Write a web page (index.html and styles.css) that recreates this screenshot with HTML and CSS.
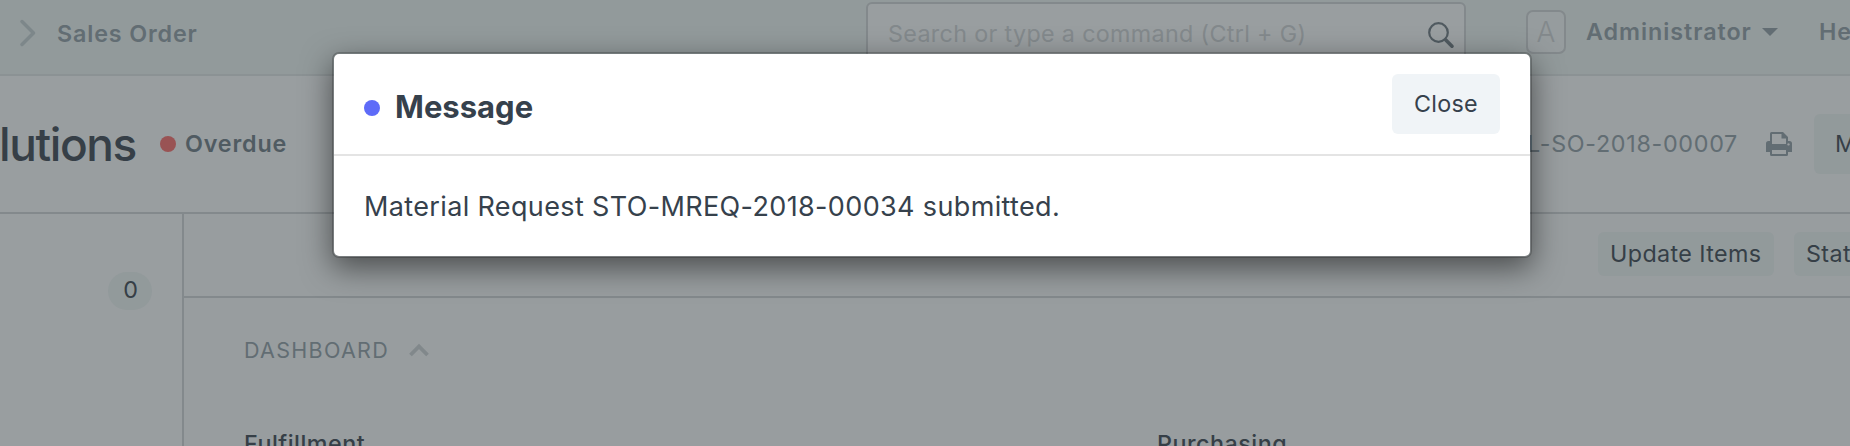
FILE: index.html
```html
<!DOCTYPE html>
<html lang="en">
<head>
<meta charset="utf-8">
<title>Sales Order</title>
<link rel="stylesheet" href="styles.css">
</head>
<body>
<div class="page">
  <header class="navbar">
    <svg class="crumb-arrow" width="20" height="30" viewBox="0 0 20 30"><path d="M4 3.500L15.500 15L4 26.500" fill="none" stroke="#7d878a" stroke-width="3.500" stroke-linecap="round" stroke-linejoin="round"/></svg>
    <span class="crumb">Sales Order</span>
    <div class="search">
      <span class="search-text">Search or type a command (Ctrl + G)</span>
      <svg width="28" height="28" viewBox="0 0 28 28"><circle cx="11.500" cy="11.500" r="9.300" fill="none" stroke="#505a60" stroke-width="2.200"/><path d="M18.800 19L25 25.200" stroke="#505a60" stroke-width="3.600" stroke-linecap="round"/></svg>
    </div>
    <span class="avatar">A</span>
    <span class="user">Administrator</span>
    <span class="caret"></span>
    <span class="help">Help</span>
  </header>
  <section class="page-head">
    <h1 class="title">lutions</h1>
    <span class="dot dot-red"></span>
    <span class="status">Overdue</span>
    <span class="doc-name">SAL-SO-2018-00007</span>
    <svg class="printer" width="26" height="24" viewBox="0 0 26 24"><path fill="#626d73" fill-rule="evenodd" d="M4 9V1.500Q4 0 5.500 0H17l5 5V9h1.500Q26 9 26 11.500V20H22v2.500Q22 24 20.500 24H5.500Q4 24 4 22.500V20H0V11.500Q0 9 2.500 9ZM6 2V12H20V6.500H15.500V2ZM6 18V22H20V18ZM22.500 11.200a1.200 1.200 0 1 0 .01 0Z"/></svg>
    <span class="menu-button">Menu</span>
  </section>
  <div class="body">
    <aside class="sidebar"><span class="badge">0</span></aside>
    <main class="main">
      <div class="toolbar">
        <span class="tool tool-update">Update Items</span>
        <span class="tool tool-status">Status</span>
      </div>
      <div class="section-head">
        <span class="section-title">DASHBOARD</span>
        <svg width="20" height="14" viewBox="0 0 20 14"><path d="M1.500 12L10 3.500L18.500 12" fill="none" stroke="#81888b" stroke-width="3.800"/></svg>
      </div>
      <div class="columns">
        <span class="fulfillment">Fulfillment</span>
        <span class="purchasing">Purchasing</span>
      </div>
    </main>
  </div>
</div>
<div class="modal">
  <div class="modal-head">
    <span class="dot dot-blue"></span>
    <h2 class="modal-title">Message</h2>
    <button class="close">Close</button>
  </div>
  <div class="modal-body"><span class="message">Material Request STO-MREQ-2018-00034 submitted.</span></div>
</div>
</body>
</html>
```
FILE: styles.css
```css
* { box-sizing: border-box; }
body {
  margin: 0;
  width: 1850px;
  height: 446px;
  overflow: hidden;
  position: relative;
  background: #999ea0;
  color: #363f47;
  font-family: Inter, "Liberation Sans", sans-serif;
  font-size: 23.300px;
  line-height: 30px;
  white-space: nowrap;
}
.page { width: 1850px; height: 446px; overflow: hidden; display: flex; flex-direction: column; }
.navbar {
  flex: none;
  height: 76px;
  display: flex;
  align-items: flex-start;
  background: #929a9b;
  border-bottom: 2px solid #8b9294;
  color: #626d73;
  font-weight: 600;
}
.crumb-arrow { margin: 18px 0 0 18px; flex: none; }
.crumb { width: 809px; margin: 19px 0 0 19px; letter-spacing: 0.850px; flex: none; }
.search {
  flex: none;
  width: 600px;
  height: 60px;
  margin-top: 2px;
  padding: 15px 9px 0 20px;
  display: flex;
  justify-content: space-between;
  align-items: flex-start;
  border: 2px solid #83898c;
  border-radius: 6px;
  background: #999ea0;
  color: #83898c;
  font-weight: 400;
}
.search svg { margin-top: 2px; }
.search-text { letter-spacing: 0.340px; }
.avatar {
  flex: none;
  width: 40px;
  height: 44px;
  margin: 10px 0 0 60px;
  border: 2px solid #83898c;
  border-radius: 7px;
  background: #969c9e;
  color: #83898c;
  font-size: 28px;
  font-weight: 300;
  line-height: 40px;
  text-align: center;
}
.user { width: 166px; margin: 17px 0 0 20px; letter-spacing: 0.950px; flex: none; }
.caret { flex: none; margin: 28px 42px 0 10px; border: 8px solid transparent; border-top-color: #626d73; border-bottom: 0; }
.help { margin: 17px 0 0 -1px; letter-spacing: 0.850px; }
.page-head {
  flex: none;
  height: 138px;
  display: flex;
  align-items: center;
  border-bottom: 2px solid #83898c;
}
.title { flex: none; width: 138px; margin: 0 23px 0 -1px; font-size: 46px; line-height: 60px; font-weight: 500; letter-spacing: -1.400px; }
.dot { flex: none; width: 16px; height: 16px; border-radius: 50%; }
.dot-red { background: #995354; }
.dot-blue { background: #5e6bf8; }
.status { width: 1000px; margin-left: 9px; font-weight: 600; color: #505b62; letter-spacing: 0.850px; }
.doc-name { flex: 1; text-align: right; color: #626d73; letter-spacing: 0.700px; }
.printer { flex: none; margin: 0 22px 0 28px; }
.menu-button { flex: none; width: 120px; margin-right: -84px; height: 60px; line-height: 60px; padding-left: 21px; border-radius: 6px; background: #929a9b; }
.body { flex: 1; display: flex; }
.sidebar { flex: none; width: 184px; border-right: 2px solid #83898c; padding: 58px 0 0 108px; }
.badge { display: block; width: 44px; height: 38px; border-radius: 19px; background: #929a9b; text-align: center; line-height: 36px; padding-left: 1px; }
.main { flex: 1; min-width: 0; background: #989d9f; }
.toolbar { height: 84px; display: flex; padding: 18px 0 0 1414px; gap: 20px; border-bottom: 2px solid #83898c; }
.tool { flex: none; height: 44px; line-height: 43px; border-radius: 6px; background: #929a9b; padding-left: 12px; letter-spacing: 0.400px; }
.tool-update { width: 176px; }
.tool-status { width: 120px; }
.section-head { display: flex; align-items: center; margin: 37px 0 0 60px; height: 30px; font-size: 21.500px; color: #626d73; }
.section-title { width: 165px; letter-spacing: 1.300px; }
.section-head svg { margin-top: -1px; }
.columns { display: grid; grid-template-columns: 913px 1fr; margin: 64px 0 0 60px; font-weight: 500; height: 17px; overflow: hidden; letter-spacing: 0.500px; }
.modal {
  position: absolute;
  left: 332px;
  top: 52px;
  width: 1200px;
  height: 206px;
  border: 2px solid rgba(0, 0, 0, 0.2);
  border-radius: 7px;
  background: #fff;
  background-clip: padding-box;
  box-shadow: 0 10px 30px rgba(0, 0, 0, 0.5);
  color: #36414c;
}
.modal-head { display: flex; align-items: center; height: 102px; padding: 0 30px; border-bottom: 2px solid #e4e4e4; }
.modal-head .dot { margin-top: 8px; }
.modal-title { margin: 6px auto 0 15px; font-size: 31px; line-height: 40px; font-weight: 700; }
.close { width: 108px; height: 60px; margin-top: 0; padding: 0; border: 0; border-radius: 6px; background: #f0f4f7; color: #36414c; font: inherit; letter-spacing: 0.300px; }
.modal-body { padding: 31px 30px; font-size: 27px; line-height: 40px; }
.message { letter-spacing: 0.360px; }
```
